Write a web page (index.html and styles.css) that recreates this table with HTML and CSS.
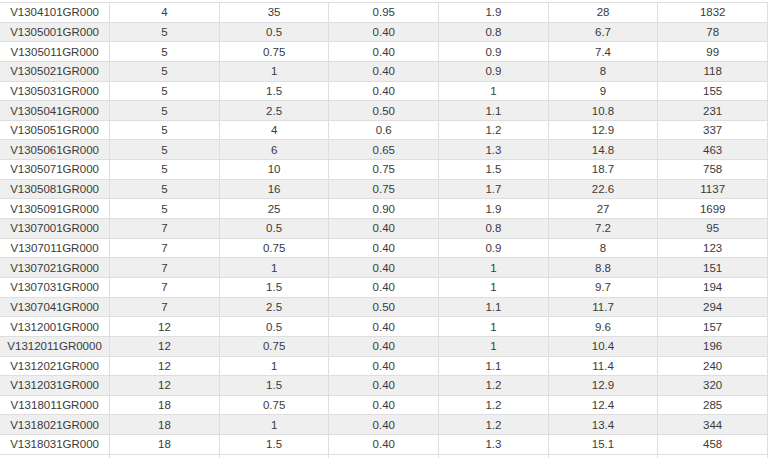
FILE: index.html
```html
<!DOCTYPE html>
<html>
<head>
<meta charset="utf-8">
<link rel="stylesheet" href="styles.css">
</head>
<body>
<table class="spec">
<tbody>
<tr><td>V1304101GR000</td><td>4</td><td>35</td><td>0.95</td><td>1.9</td><td>28</td><td>1832</td></tr>
<tr><td>V1305001GR000</td><td>5</td><td>0.5</td><td>0.40</td><td>0.8</td><td>6.7</td><td>78</td></tr>
<tr><td>V1305011GR000</td><td>5</td><td>0.75</td><td>0.40</td><td>0.9</td><td>7.4</td><td>99</td></tr>
<tr><td>V1305021GR000</td><td>5</td><td>1</td><td>0.40</td><td>0.9</td><td>8</td><td>118</td></tr>
<tr><td>V1305031GR000</td><td>5</td><td>1.5</td><td>0.40</td><td>1</td><td>9</td><td>155</td></tr>
<tr><td>V1305041GR000</td><td>5</td><td>2.5</td><td>0.50</td><td>1.1</td><td>10.8</td><td>231</td></tr>
<tr><td>V1305051GR000</td><td>5</td><td>4</td><td>0.6</td><td>1.2</td><td>12.9</td><td>337</td></tr>
<tr><td>V1305061GR000</td><td>5</td><td>6</td><td>0.65</td><td>1.3</td><td>14.8</td><td>463</td></tr>
<tr><td>V1305071GR000</td><td>5</td><td>10</td><td>0.75</td><td>1.5</td><td>18.7</td><td>758</td></tr>
<tr><td>V1305081GR000</td><td>5</td><td>16</td><td>0.75</td><td>1.7</td><td>22.6</td><td>1137</td></tr>
<tr><td>V1305091GR000</td><td>5</td><td>25</td><td>0.90</td><td>1.9</td><td>27</td><td>1699</td></tr>
<tr><td>V1307001GR000</td><td>7</td><td>0.5</td><td>0.40</td><td>0.8</td><td>7.2</td><td>95</td></tr>
<tr><td>V1307011GR000</td><td>7</td><td>0.75</td><td>0.40</td><td>0.9</td><td>8</td><td>123</td></tr>
<tr><td>V1307021GR000</td><td>7</td><td>1</td><td>0.40</td><td>1</td><td>8.8</td><td>151</td></tr>
<tr><td>V1307031GR000</td><td>7</td><td>1.5</td><td>0.40</td><td>1</td><td>9.7</td><td>194</td></tr>
<tr><td>V1307041GR000</td><td>7</td><td>2.5</td><td>0.50</td><td>1.1</td><td>11.7</td><td>294</td></tr>
<tr><td>V1312001GR000</td><td>12</td><td>0.5</td><td>0.40</td><td>1</td><td>9.6</td><td>157</td></tr>
<tr><td>V1312011GR0000</td><td>12</td><td>0.75</td><td>0.40</td><td>1</td><td>10.4</td><td>196</td></tr>
<tr><td>V1312021GR000</td><td>12</td><td>1</td><td>0.40</td><td>1.1</td><td>11.4</td><td>240</td></tr>
<tr><td>V1312031GR000</td><td>12</td><td>1.5</td><td>0.40</td><td>1.2</td><td>12.9</td><td>320</td></tr>
<tr><td>V1318011GR000</td><td>18</td><td>0.75</td><td>0.40</td><td>1.2</td><td>12.4</td><td>285</td></tr>
<tr><td>V1318021GR000</td><td>18</td><td>1</td><td>0.40</td><td>1.2</td><td>13.4</td><td>344</td></tr>
<tr><td>V1318031GR000</td><td>18</td><td>1.5</td><td>0.40</td><td>1.3</td><td>15.1</td><td>458</td></tr>
<tr class="stub"><td></td><td></td><td></td><td></td><td></td><td></td><td></td></tr>
</tbody>
</table>
</body>
</html>
```

FILE: styles.css
```css
html, body {
  margin: 0;
  padding: 0;
  background: #ffffff;
  overflow: hidden;
}

.spec {
  width: 768px;
  margin-top: 2px;
  border-collapse: collapse;
  table-layout: fixed;
  font-family: "Liberation Sans", Arial, sans-serif;
  font-size: 11.5px;
  color: #3a3a3a;
}

.spec td {
  height: 18.65px;
  padding: 0;
  text-align: center;
  vertical-align: middle;
  border: 1px solid #dedede;
  line-height: 14px;
}

.spec td:first-child {
  border-left: none;
}

.spec tr:nth-child(even) td {
  background: #efefef;
}

.spec tr:nth-child(odd) td {
  background: #ffffff;
}

.spec tr.stub td {
  background: #ffffff;
}
```
